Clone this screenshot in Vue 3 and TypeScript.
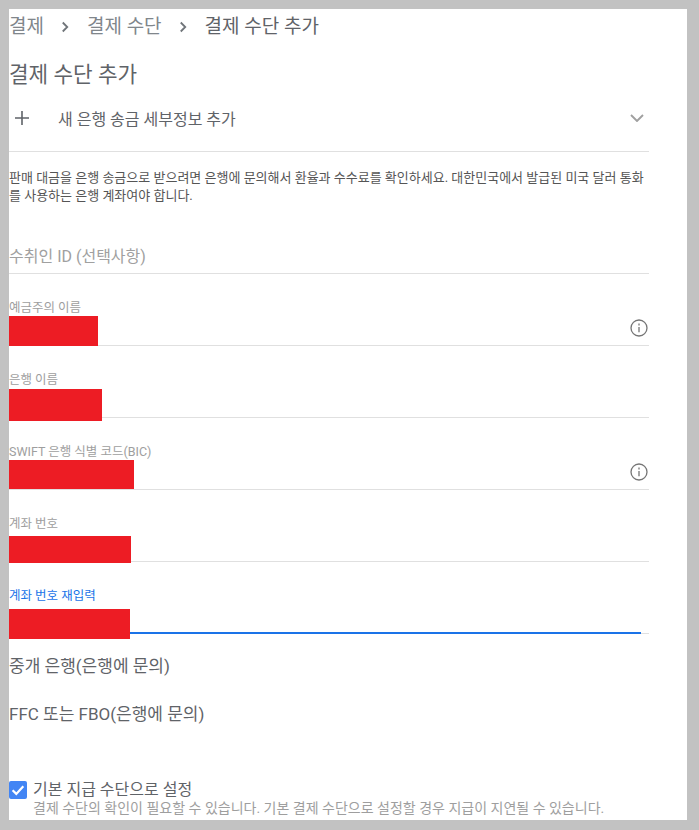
<script setup lang="ts">
const fields = [
  { label: '예금주의 이름', bar: 89, barTop: 42, barH: 30, info: true },
  { label: '은행 이름', bar: 93, barTop: 43, barH: 32, info: false },
  { label: 'SWIFT 은행 식별 코드(BIC)', bar: 125, barTop: 42, barH: 29, info: true },
  { label: '계좌 번호', bar: 122, barTop: 46, barH: 27, info: false },
  { label: '계좌 번호 재입력', bar: 121, barTop: 47, barH: 30, info: false, active: true },
]
</script>

<template>
  <div class="page">
    <nav class="crumbs">
      <span>결제</span>
      <svg class="crumb-arrow" viewBox="0 0 24 24" fill="none" stroke="currentColor" stroke-width="2.4"><path d="m9 6 6 6-6 6"/></svg>
      <span>결제 수단</span>
      <svg class="crumb-arrow" viewBox="0 0 24 24" fill="none" stroke="currentColor" stroke-width="2.4"><path d="m9 6 6 6-6 6"/></svg>
      <span class="current">결제 수단 추가</span>
    </nav>
    <h1 class="title">결제 수단 추가</h1>
    <div class="add-row">
      <svg class="plus" viewBox="0 0 14 14" fill="none" stroke="currentColor" stroke-width="1.6"><path d="M7 0v14M0 7h14"/></svg>
      <span class="add-text">새 은행 송금 세부정보 추가</span>
      <svg class="chevron" viewBox="0 0 14 8" fill="none" stroke="currentColor" stroke-width="1.9"><path d="m1 1 6 6 6-6"/></svg>
    </div>
    <p class="notice">판매 대금을 은행 송금으로 받으려면 은행에 문의해서 환율과 수수료를 확인하세요. 대한민국에서 발급된 미국 달러 통화를 사용하는 은행 계좌여야 합니다.</p>
    <div class="payee">수취인 ID (선택사항)</div>
    <div v-for="f in fields" :key="f.label" class="field" :class="{ active: f.active }">
      <label class="field-label">{{ f.label }}</label>
      <div class="redact" :style="{ width: f.bar + 'px', top: f.barTop + 'px', height: f.barH + 'px' }"></div>
      <svg v-if="f.info" class="info" viewBox="0 0 18 18" fill="none" stroke="currentColor" stroke-width="1.3">
        <circle cx="9" cy="9" r="8"/>
        <path d="M9 8v5.2"/>
        <path d="M9 4.6v1.8"/>
      </svg>
    </div>
    <div class="plain first">중개 은행(은행에 문의)</div>
    <div class="plain second">FFC 또는 FBO(은행에 문의)</div>
    <div class="check-row">
      <span class="checkbox">
        <svg viewBox="0 0 18 18" fill="none" stroke="#fff" stroke-width="2.2"><path d="m3.6 9.2 3.7 3.7 7-7.6"/></svg>
      </span>
      <div>
        <div class="check-title">기본 지급 수단으로 설정</div>
        <div class="check-sub">결제 수단의 확인이 필요할 수 있습니다. 기본 결제 수단으로 설정할 경우 지급이 지연될 수 있습니다.</div>
      </div>
    </div>
  </div>
</template>

<style>
html, body { background: #c2c2c2; overflow: hidden; }
</style>

<style scoped>
.page {
  box-sizing: border-box;
  width: 678px;
  height: 811px;
  margin: 9px 0 0 9px;
  padding-right: 38px;
  background: #fff;
  overflow: hidden;
  font-family: Roboto, "Noto Sans CJK KR", sans-serif;
  color: #5f6368;
}
.crumbs { display: flex; align-items: center; box-sizing: border-box; height: 34px; padding-bottom: 3px; font-size: 19px; color: #80868b; }
.crumb-arrow { width: 18px; height: 18px; margin: 4px 13px 0 12px; color: #70757a; }
.current { color: #5f6368; }
.title { margin: 17px 0 0; height: 30px; line-height: 30px; font-size: 21.3px; font-weight: 400; color: #5f6368; }
.add-row { display: flex; align-items: center; box-sizing: border-box; height: 62px; padding-bottom: 5px; border-bottom: 1px solid #e0e0e0; }
.plus { width: 14px; height: 14px; margin-left: 6px; color: #5f6368; }
.add-text { margin-left: 29px; font-size: 16px; color: #5f6368; flex: 1; }
.chevron { width: 14px; height: 8px; margin-right: 5px; color: #a0a0a0; }
.notice { margin: 17px 0 0; font-size: 13px; line-height: 18px; color: #555; }
.payee { box-sizing: border-box; height: 51px; margin-top: 18px; padding-top: 22px; line-height: 24px; font-size: 16px; color: #a0a0a0; border-bottom: 1px solid #e0e0e0; }
.field { position: relative; box-sizing: border-box; height: 72px; border-bottom: 1px solid #e0e0e0; }
.field-label { position: absolute; left: 0; top: 26px; font-size: 12.5px; line-height: 16px; color: #9e9e9e; white-space: nowrap; }
.field.active::after { content: ''; position: absolute; left: 0; right: 8px; bottom: -1px; height: 2px; background: #1a73e8; }
.field.active .field-label { color: #1a73e8; }
.redact { position: absolute; left: 0; background: #ed1c24; z-index: 1; }
.info { position: absolute; right: 1px; top: 45px; width: 18px; height: 18px; color: #757575; }
.plain { font-size: 17px; line-height: 22px; color: #5f6368; }
.plain.first { margin-top: 21px; }
.plain.second { margin-top: 26px; }
.check-row { display: flex; gap: 6px; margin-top: 55px; }
.checkbox { flex: none; width: 18px; height: 18px; margin-top: 1px; border-radius: 2px; background: #4285f4; }
.checkbox svg { display: block; width: 18px; height: 18px; }
.check-title { font-size: 16px; line-height: 20px; color: #5f6368; }
.check-sub { font-size: 14px; line-height: 16px; color: #9e9e9e; white-space: nowrap; }
</style>
